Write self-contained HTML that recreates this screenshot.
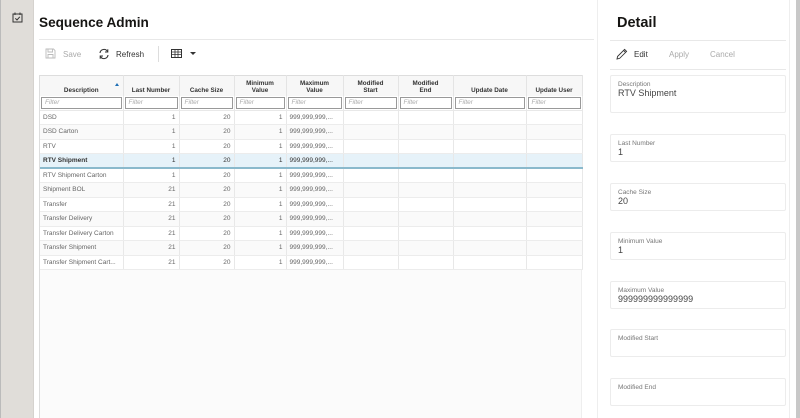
<!DOCTYPE html>
<html><head><meta charset="utf-8"><style>
*{margin:0;padding:0;box-sizing:border-box}
body{width:800px;height:418px;overflow:hidden;background:#fff;font-family:"Liberation Sans",sans-serif;position:relative;color:#333}
.abs{position:absolute}
#side{left:0;top:0;width:34px;height:418px;background:#e0ddd9;border-left:1px solid #bbb;border-right:1px solid #d5d2ce}
h1{position:absolute;font-size:13.6px;font-weight:bold;color:#161513}
.hl{position:absolute;height:1px;background:#e8e8e8}
.tb{position:absolute;font-size:8px;top:50px}
#grid{left:39px;top:75px;width:543px;height:343px;background:#fbfbfb;border-left:1px solid #ddd;border-right:1px solid #eee}
table{border-collapse:collapse;table-layout:fixed;font-size:6.5px}
th{height:20px;font-weight:bold;color:#333;background:#f7f7f7;border-right:1px solid #e4e4e4;border-top:1px solid #ddd;vertical-align:bottom;padding:0 2px 2px;line-height:7px;font-size:6.3px}
td{height:14.5px;border-right:1px solid #e8e8e8;border-bottom:1px solid #ececec;padding:0 3px;color:#666;white-space:nowrap;overflow:hidden;background:#fff}
tr.alt td{background:#fafafa}
td.n{text-align:right}
tr.f td{height:14px;padding:1px;background:#fff;border-bottom:1px solid #e8e8e8}
.fi{border:1px solid #999;height:12px;font-style:italic;color:#aaa;font-size:6.5px;padding:1px 3px;background:#fff}
tr.sel td{background:#e6f2f9;color:#333;border-top:1px solid #8ab9cc;border-bottom:2px solid #8ab9cc}
.box{position:absolute;left:610px;width:176px;border:1px solid #ececec;border-radius:2px;padding:5px 7px}
.lb{font-size:6.5px;color:#777}
.vl{font-size:9px;color:#444;line-height:10px}
</style></head><body>
<div id="side" class="abs">
<svg class="abs" style="left:11px;top:12px" width="11" height="11" viewBox="0 0 11 11"><rect x="1" y="2" width="9" height="8" fill="none" stroke="#333" stroke-width="1"/><line x1="3" y1="0.5" x2="3" y2="3" stroke="#333"/><line x1="8" y1="0.5" x2="8" y2="3" stroke="#333"/><path d="M3.3 6.3 L5 8 L7.8 4.8" fill="none" stroke="#333"/></svg>
</div>
<div class="abs" style="left:597px;top:0;width:1px;height:418px;background:#eee"></div>
<div class="abs" style="left:796px;top:0;width:4px;height:418px;background:#c8c8c8"></div>
<div class="abs" style="left:789px;top:0;width:1px;height:418px;background:#eee"></div>
<h1 style="left:39px;top:15px">Sequence Admin</h1>
<div class="hl" style="left:39px;top:39px;width:555px"></div>
<svg class="abs" style="left:45px;top:48px" width="11" height="11" viewBox="0 0 11 11"><path d="M1 1H8.5L10 2.5V10H1Z M3 1V4H7.5V1 M3 10V6.5H8V10" fill="none" stroke="#bbb" stroke-width="0.9"/></svg>
<div class="tb" style="left:63px;color:#aaa">Save</div>
<svg class="abs" style="left:98px;top:48px" width="12" height="12" viewBox="0 0 12 12"><path d="M2 5A4 4 0 0 1 9.5 3.5M10 7A4 4 0 0 1 2.5 8.5" fill="none" stroke="#333" stroke-width="1.1"/><path d="M9.8 1.2V4H7" fill="none" stroke="#333"/><path d="M2.2 10.8V8H5" fill="none" stroke="#333"/></svg>
<div class="tb" style="left:116px;color:#333">Refresh</div>
<div class="abs" style="left:158px;top:46px;width:1px;height:16px;background:#ddd"></div>
<svg class="abs" style="left:171px;top:49px" width="11" height="9" viewBox="0 0 11 9"><rect x="0.5" y="0.5" width="10" height="8" fill="none" stroke="#333"/><path d="M0.5 3H10.5M0.5 5.5H10.5M4 0.5V8.5M7 0.5V8.5" stroke="#333" stroke-width="0.8"/></svg>
<div class="abs" style="left:190px;top:52px;border-left:3px solid transparent;border-right:3px solid transparent;border-top:3px solid #333"></div>
<div id="grid" class="abs">
<table style="width:542px">
<colgroup><col style="width:83px"><col style="width:56px"><col style="width:55px"><col style="width:52px"><col style="width:57px"><col style="width:55px"><col style="width:55px"><col style="width:73px"><col style="width:56px"></colgroup>
<tr><th style="position:relative">Description<span style="position:absolute;right:4px;top:7px;border-left:2.5px solid transparent;border-right:2.5px solid transparent;border-bottom:3px solid #1e6fb5"></span></th><th>Last Number</th><th>Cache Size</th><th>Minimum<br>Value</th><th>Maximum<br>Value</th><th>Modified<br>Start</th><th>Modified<br>End</th><th>Update Date</th><th>Update User</th></tr>
<tr class="f"><td><div class="fi">Filter</div></td><td><div class="fi">Filter</div></td><td><div class="fi">Filter</div></td><td><div class="fi">Filter</div></td><td><div class="fi">Filter</div></td><td><div class="fi">Filter</div></td><td><div class="fi">Filter</div></td><td><div class="fi">Filter</div></td><td><div class="fi">Filter</div></td></tr>
<tr><td>DSD</td><td class="n">1</td><td class="n">20</td><td class="n">1</td><td>999,999,999,...</td><td></td><td></td><td></td><td></td></tr>
<tr class="alt"><td>DSD Carton</td><td class="n">1</td><td class="n">20</td><td class="n">1</td><td>999,999,999,...</td><td></td><td></td><td></td><td></td></tr>
<tr><td>RTV</td><td class="n">1</td><td class="n">20</td><td class="n">1</td><td>999,999,999,...</td><td></td><td></td><td></td><td></td></tr>
<tr class="sel"><td><b>RTV Shipment</b></td><td class="n">1</td><td class="n">20</td><td class="n">1</td><td>999,999,999,...</td><td></td><td></td><td></td><td></td></tr>
<tr><td>RTV Shipment Carton</td><td class="n">1</td><td class="n">20</td><td class="n">1</td><td>999,999,999,...</td><td></td><td></td><td></td><td></td></tr>
<tr class="alt"><td>Shipment BOL</td><td class="n">21</td><td class="n">20</td><td class="n">1</td><td>999,999,999,...</td><td></td><td></td><td></td><td></td></tr>
<tr><td>Transfer</td><td class="n">21</td><td class="n">20</td><td class="n">1</td><td>999,999,999,...</td><td></td><td></td><td></td><td></td></tr>
<tr class="alt"><td>Transfer Delivery</td><td class="n">21</td><td class="n">20</td><td class="n">1</td><td>999,999,999,...</td><td></td><td></td><td></td><td></td></tr>
<tr><td>Transfer Delivery Carton</td><td class="n">21</td><td class="n">20</td><td class="n">1</td><td>999,999,999,...</td><td></td><td></td><td></td><td></td></tr>
<tr class="alt"><td>Transfer Shipment</td><td class="n">21</td><td class="n">20</td><td class="n">1</td><td>999,999,999,...</td><td></td><td></td><td></td><td></td></tr>
<tr><td>Transfer Shipment Cart...</td><td class="n">21</td><td class="n">20</td><td class="n">1</td><td>999,999,999,...</td><td></td><td></td><td></td><td></td></tr>
</table>
</div>
<h1 style="left:617px;top:15px;font-size:14.5px">Detail</h1>
<div class="hl" style="left:610px;top:40px;width:176px"></div>
<svg class="abs" style="left:616px;top:48px" width="12" height="12" viewBox="0 0 12 12"><path d="M1 11L1.6 8.4L8.6 1.4L10.6 3.4L3.6 10.4Z M7.6 2.4L9.6 4.4" fill="none" stroke="#333" stroke-width="0.9"/></svg>
<div class="tb" style="left:634px;color:#333">Edit</div>
<div class="tb" style="left:669px;color:#aaa">Apply</div>
<div class="tb" style="left:710px;color:#aaa">Cancel</div>
<div class="hl" style="left:610px;top:69px;width:176px"></div>
<div class="box" style="top:75px;height:38px"><div class="lb">Description</div><div class="vl">RTV Shipment</div></div>
<div class="box" style="top:134px;height:28px"><div class="lb">Last Number</div><div class="vl">1</div></div>
<div class="box" style="top:183px;height:28px"><div class="lb">Cache Size</div><div class="vl">20</div></div>
<div class="box" style="top:232px;height:28px"><div class="lb">Minimum Value</div><div class="vl">1</div></div>
<div class="box" style="top:281px;height:28px"><div class="lb">Maximum Value</div><div class="vl">999999999999999</div></div>
<div class="box" style="top:329px;height:28px"><div class="lb">Modified Start</div></div>
<div class="box" style="top:378px;height:28px"><div class="lb">Modified End</div></div>
</body></html>
